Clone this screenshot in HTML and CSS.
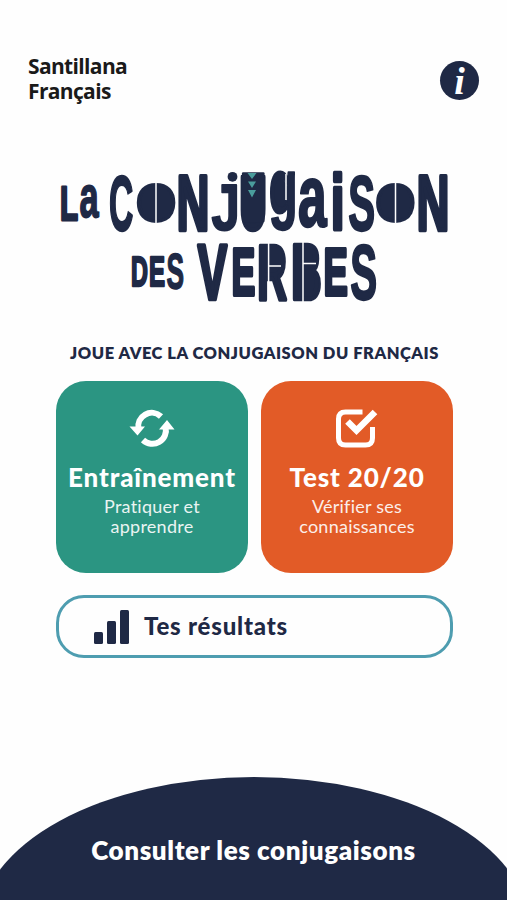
FILE: index.html
```
<!DOCTYPE html>
<html lang="fr">
<head>
<meta charset="UTF-8">
<meta name="viewport" content="width=device-width, initial-scale=1.0">
<title>La conjugaison des verbes</title>
<link rel="stylesheet" href="styles.css">
</head>
<body>

<header class="header">
  <div class="brand">Santillana<br>Français</div>
  <button class="info" aria-label="Informations">i</button>
</header>

<main class="main">
  <!-- Logo -->
  <svg class="logo" viewBox="50 165 405 145" role="img" aria-label="La conjugaison des verbes">
    <g class="letters">
      <text transform="matrix(.296 0 0 .49 60.1 219.5)">L</text>
      <text class="thin" transform="matrix(.344 0 0 .594 79.4 217.4)">a</text>

      <text class="thin" transform="matrix(.337 0 0 .78 108.9 229.9)">C</text>
      <text transform="matrix(.511 0 0 .5125 136.3 220.85)">O</text>
      <text transform="matrix(.45 0 0 .773 176.8 229.7)">N</text>
      <text class="thin" transform="matrix(.51 0 0 .646 211.6 230.3)">J</text>
      <text transform="matrix(.377 0 0 .761 239.5 228.8)">U</text>
      <text class="thin" transform="matrix(.47 0 0 .777 268.8 214.4)">g</text>
      <text class="thin" transform="matrix(.515 0 0 .88 298.1 225.6)">a</text>
      <text transform="matrix(.48 0 0 .773 331 229.7)">i</text>
      <text class="thin" transform="matrix(.403 0 0 .78 348.2 229.9)">S</text>
      <text transform="matrix(.511 0 0 .5125 375.4 220.85)">O</text>
      <text transform="matrix(.45 0 0 .773 416.8 229.7)">N</text>

      <text transform="matrix(.234 0 0 .425 131 285.7)">D</text>
      <text transform="matrix(.24 0 0 .425 149 285.7)">E</text>
      <text class="thin" transform="matrix(.263 0 0 .506 166.4 288.6)">S</text>

      <text transform="matrix(.44 0 0 .773 197.8 298.7)">V</text>
      <text transform="matrix(.357 0 0 .67 231.5 295)">E</text>
      <text transform="matrix(.41 0 0 .773 257.2 298.7)">R</text>
      <text transform="matrix(.42 0 0 .773 291.2 298.7)">B</text>
      <text transform="matrix(.365 0 0 .67 323.4 295)">E</text>
      <text class="thin" transform="matrix(.403 0 0 .78 350.2 298.9)">S</text>
    </g>
    <!-- pleins -->
    <g class="fills">
      <ellipse cx="156.2" cy="202.5" rx="15" ry="17"/>
      <ellipse cx="395.4" cy="202.5" rx="15" ry="17"/>
      <circle cx="232.5" cy="176.8" r="4.9"/>
      <rect x="242" y="172.200" width="22.500" height="50" rx="1"/>
      <ellipse cx="281" cy="193" rx="7" ry="14"/>
      <rect x="264" y="247" width="16" height="21"/>
      <rect x="298" y="247" width="14" height="20"/>
      <rect x="298" y="271" width="15" height="22"/>
    </g>
    <!-- découpes -->
    <g class="cuts">
      <path d="M156 181v43M395.5 181v43M286 174v26M268.6 241v61M303 241v61M269 266h12M303 263.500h13"/>
    </g>
    <path class="deco" d="M247.500 173h9l-4.500 6zM248 181.500h8l-4 6.500zM248 190h8l-4 7.500z"/>
  </svg>

  <h1 class="tagline">JOUE AVEC LA CONJUGAISON DU FRANÇAIS</h1>

  <div class="cards">
    <a class="card green">
      <svg class="icon" viewBox="0 0 46 40">
        <path class="arc" d="M9.500 21A13.500 13.500 0 0 1 32 8.500M36.500 19A13.500 13.500 0 0 1 14 32"/>
        <path class="head" d="M.5 18.500h15.500l-7.500 9zM30 21.500h15.500L38 12z"/>
      </svg>
      <h2>Entraînement</h2>
      <p>Pratiquer et<br>apprendre</p>
    </a>
    <a class="card orange">
      <svg class="icon" viewBox="0 0 46 40">
        <path class="box" d="M28.500 4H11.500q-7 0-7 7v19q0 7 7 7h20q7 0 7-7V19"/>
        <path class="tick" d="M13.500 13.500l9 9L41 4"/>
      </svg>
      <h2>Test 20/20</h2>
      <p>Vérifier ses<br>connaissances</p>
    </a>
  </div>

  <a class="results">
    <svg class="bars" viewBox="0 0 36 34">
      <rect x="0" y="22" width="9" height="12" rx="1.500"/>
      <rect x="13" y="11" width="9" height="23" rx="1.500"/>
      <rect x="26" y="0" width="9" height="34" rx="1.500"/>
    </svg>
    <span>Tes résultats</span>
  </a>
</main>

<footer class="footer">
  <a>Consulter les conjugaisons</a>
</footer>

</body>
</html>
```
FILE: styles.css
```
* {
  box-sizing: border-box;
  margin: 0;
  padding: 0;
}

body {
  height: 900px;
  display: flex;
  flex-direction: column;
  overflow: hidden;
  background: #fefefe;
  color: #1f2945;
  font-family: Lato, "Open Sans", sans-serif;
}

/* En-tête */
.header {
  display: flex;
  justify-content: space-between;
  align-items: flex-start;
  padding: 54px 28px 0;
  height: 165px;
}

.brand {
  font: 700 21px/25px "Open Sans", sans-serif;
  letter-spacing: -0.65px;
  color: #1a1a1a;
}

.info {
  width: 39px;
  height: 39px;
  margin-top: 7px;
  border: 0;
  border-radius: 50%;
  background: #1f2945;
  color: #fff;
  font: italic 700 38px/36px "Liberation Serif", serif;
}

.main {
  display: flex;
  flex-direction: column;
  padding: 0 54px 0 56px;
}

/* Logo */
.logo {
  width: 405px;
  height: 145px;
  margin-left: -6px;
}

.letters {
  font: 700 100px "Liberation Sans", sans-serif;
  fill: #1f2945;
  stroke: #1f2945;
  stroke-width: 6;
  stroke-linejoin: round;
}

.letters .thin {
  stroke-width: 3;
}

.fills {
  fill: #1f2945;
}

.cuts path {
  stroke: #fefefe;
  stroke-width: 1.5;
}

.deco {
  fill: #4a9d9c;
}

.tagline {
  margin-top: 32px;
  text-align: center;
  font-size: 16.5px;
  font-weight: 800;
  line-height: 22px;
  letter-spacing: 0.52px;
  white-space: nowrap;
}

/* Cartes */
.cards {
  display: flex;
  gap: 13px;
  margin-top: 17px;
}

.card {
  flex: 1;
  height: 192px;
  padding-top: 27px;
  border-radius: 30px;
  color: #fff;
  text-align: center;
}

.green {
  background: #2b9582;
}

.orange {
  background: #e25b27;
}

.icon {
  display: block;
  width: 46px;
  height: 40px;
  margin: 0 auto;
  fill: none;
  stroke: #fff;
}

.arc {
  stroke-width: 6;
}

.head {
  fill: #fff;
  stroke: none;
}

.box {
  stroke-width: 5;
}

.tick {
  stroke-width: 6.5;
}

.card h2 {
  margin: 12px 0 2px;
  font-size: 26px;
  font-weight: 900;
  line-height: 34px;
  letter-spacing: 0.85px;
  white-space: nowrap;
}

.card p {
  font-size: 18px;
  line-height: 20px;
  letter-spacing: 0.25px;
  opacity: 0.9;
}

/* Résultats */
.results {
  display: flex;
  align-items: center;
  gap: 14px;
  height: 63px;
  margin-top: 22px;
  padding-left: 35px;
  border: 3px solid #4e9db0;
  border-radius: 28px;
  font-size: 24px;
  font-weight: 900;
  letter-spacing: 0.8px;
}

.results span {
  margin-top: -2px;
}

.bars {
  width: 36px;
  height: 34px;
  fill: #1f2945;
}

/* Pied de page */
.footer {
  position: relative;
  display: flex;
  justify-content: center;
  height: 123px;
  margin-top: auto;
  padding-top: 56px;
  overflow: hidden;
  color: #fff;
  font-size: 26px;
  font-weight: 800;
  line-height: 34px;
  letter-spacing: 0.6px;
}

.footer::before {
  content: "";
  position: absolute;
  top: 0;
  left: -21px;
  width: 550px;
  height: 300px;
  border-radius: 50%;
  background: #1f2945;
}

.footer a {
  position: relative;
}
```
